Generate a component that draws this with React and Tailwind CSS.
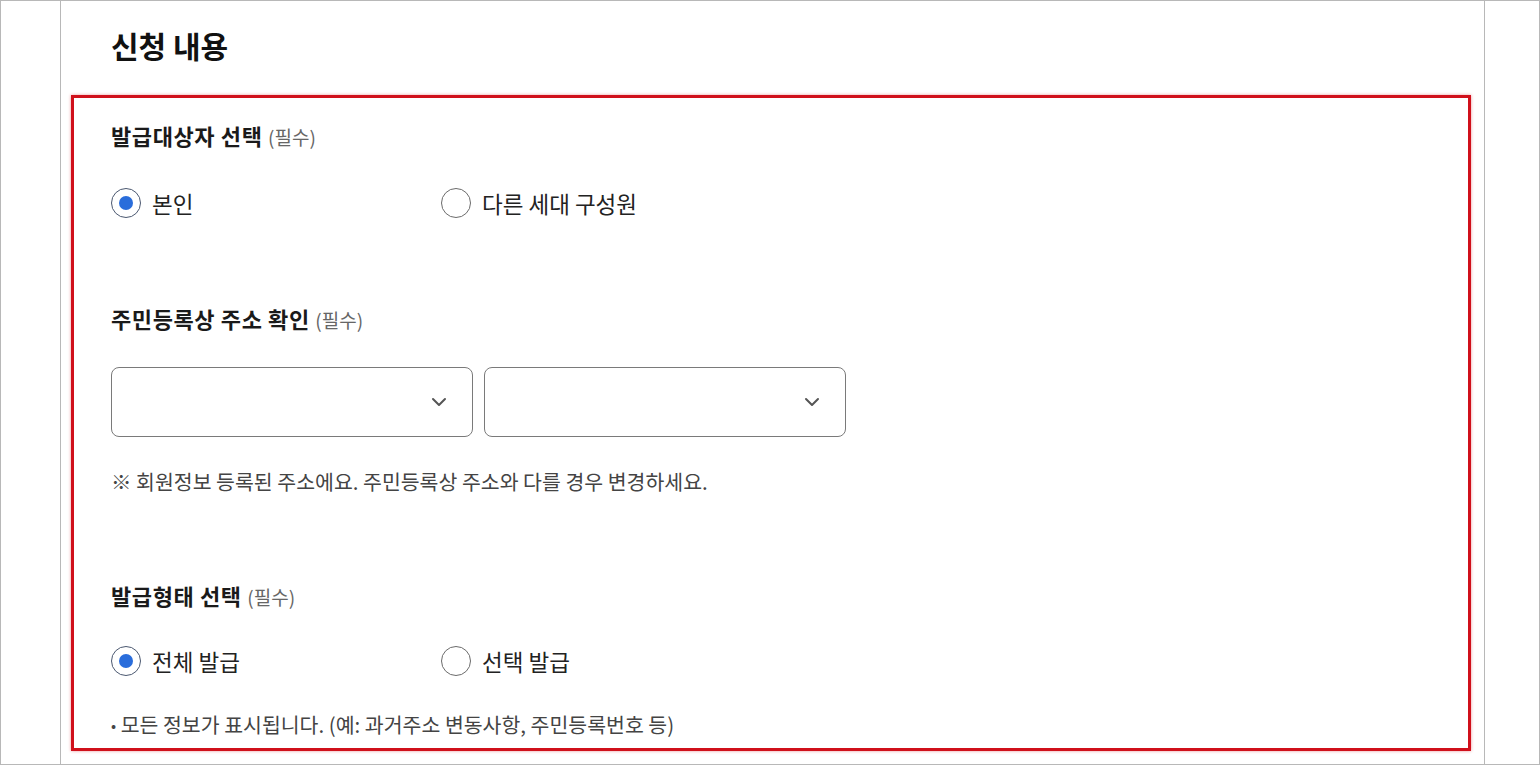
import React, { useState } from 'react';

const font = { fontFamily: '"Noto Sans CJK KR", "Noto Sans", sans-serif' };

const Radio = ({ checked, label, onClick }) => (
  <button type="button" onClick={onClick} className="flex items-center gap-[11px] w-[330px] text-left">
    <span
      className={
        'flex items-center justify-center w-[30px] h-[30px] rounded-full border bg-white ' +
        (checked ? 'border-[#4b5870]' : 'border-[#6b6b6b]')
      }
    >
      {checked && <span className="w-[14px] h-[14px] rounded-full bg-[#2a6ddb]" />}
    </span>
    <span className="text-[22.5px] leading-[30px] text-[#222]">{label}</span>
  </button>
);

const Label = ({ children, className }) => (
  <h3 className={'text-[22px] leading-[28px] font-bold tracking-[0.6px] text-[#1a1a1a] ' + className}>
    {children} <span className="text-[19px] font-normal tracking-normal text-[#666]">(필수)</span>
  </h3>
);

const SelectBox = () => (
  <div className="flex items-center justify-end w-[362px] h-[70px] border border-[#7a7a7a] rounded-[8px] bg-white pr-[25px]">
    <svg width="16" height="10" viewBox="0 0 16 10" fill="none">
      <path d="M2 2l6 6 6-6" stroke="#555" strokeWidth="2" strokeLinecap="round" strokeLinejoin="round" />
    </svg>
  </div>
);

const App = () => {
  const [target, setTarget] = useState('self');
  const [type, setType] = useState('all');

  return (
    <div style={font} className="w-[1540px] h-[765px] border border-[#b8b8b8] bg-white flex">
      <div className="w-[59px] shrink-0" />
      <div className="w-[1425px] shrink-0 border-x border-[#b8b8b8] pl-[10px] pr-[13px]">
        <h2 className="text-[30px] leading-[40px] font-bold text-[#111] pl-[40px] pt-[24px] pb-[30px]">신청 내용</h2>
        <div className="border-[3px] border-[#d0101b] shadow-[0_0_3px_rgba(210,20,30,0.45)] pl-[37px] pt-[23px] pb-[9px]">
          <Label>발급대상자 선택</Label>
          <div className="flex mt-[37px]">
            <Radio checked={target === 'self'} label="본인" onClick={() => setTarget('self')} />
            <Radio checked={target === 'other'} label="다른 세대 구성원" onClick={() => setTarget('other')} />
          </div>

          <Label className="mt-[86px]">주민등록상 주소 확인</Label>
          <div className="flex gap-[11px] mt-[33px]">
            <SelectBox />
            <SelectBox />
          </div>
          <p className="text-[20.5px] leading-[28px] text-[#444] mt-[30px]">
            ※ 회원정보 등록된 주소에요. 주민등록상 주소와 다를 경우 변경하세요.
          </p>

          <Label className="mt-[86px]">발급형태 선택</Label>
          <div className="flex mt-[35px]">
            <Radio checked={type === 'all'} label="전체 발급" onClick={() => setType('all')} />
            <Radio checked={type === 'pick'} label="선택 발급" onClick={() => setType('pick')} />
          </div>
          <p className="text-[20.5px] leading-[28px] text-[#444] mt-[34px]">
            <span className="text-[15px] align-[2px]">•</span> 모든 정보가 표시됩니다. (예: 과거주소 변동사항, 주민등록번호 등)
          </p>
        </div>
      </div>
    </div>
  );
};

export default App;
